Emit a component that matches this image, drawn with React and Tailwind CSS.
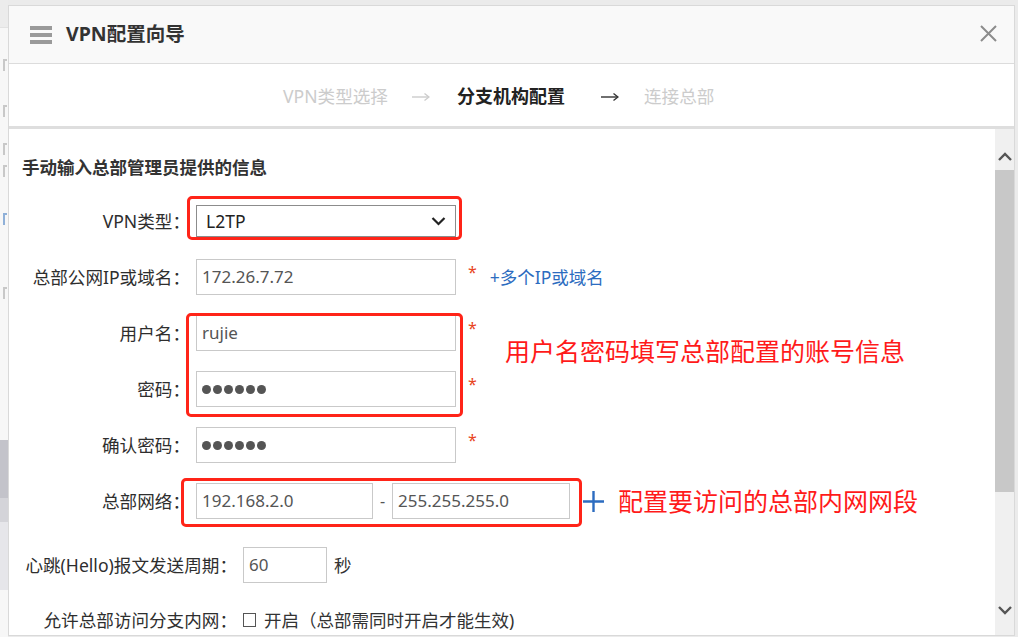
import React from 'react';

const Star = () => (
  <span className="ml-[12px] -mt-[10px] text-[16px] leading-none text-[#e8441c]">*</span>
);

const Field = ({ children, className = 'w-[260px]' }) => (
  <div className={`h-[36px] border border-[#c9c9c9] bg-white flex items-center pl-[5px] text-[17px] text-[#555] ${className}`}>
    {children}
  </div>
);

const Dots = () => (
  <div className="flex gap-[2px] pt-[1px]">
    {[0, 1, 2, 3, 4, 5].map((i) => (
      <span key={i} className="w-[9px] h-[9px] rounded-full bg-[#555]" />
    ))}
  </div>
);

const Row = ({ label, labelW = 'w-[181px]', h = 'h-[56px]', children }) => (
  <div className={`flex items-center ${h}`}>
    <div className={`${labelW} shrink-0 text-right text-[17.6px] text-[#2e2e2e] whitespace-nowrap`}>{label}</div>
    <div className="ml-[6px] flex items-center">{children}</div>
  </div>
);

const Arrow = ({ color }) => (
  <svg width="18" height="10" viewBox="0 0 18 10" fill="none" stroke={color} strokeWidth="1.4">
    <path d="M0 5h16.5" />
    <path d="M12.5 1.5 17 5l-4.5 3.5" />
  </svg>
);

// 背景页左侧露出的一小条（只剩字的残边）
const Frag = ({ color = '#c8c8c8', h = 'h-[22px]' }) => (
  <div className={`${h} flex items-center justify-end pr-[1px]`}>
    <span className="w-[4px] h-[12px] border-l-2 border-t-2" style={{ borderColor: color }} />
  </div>
);

const LeftStrip = () => (
  <div className="w-[8px] shrink-0 flex flex-col bg-[#f7f7f7]">
    <div className="h-[28px] bg-[#ececec] border-b border-[#e2e2e2]" />
    <div className="h-[26px]" />
    <Frag />
    <div className="h-[24px]" />
    <Frag />
    <div className="h-[16px]" />
    <Frag />
    <Frag />
    <div className="h-[26px]" />
    <Frag color="#8fb0d8" />
    <div className="h-[52px]" />
    <Frag />
    <div className="h-[136px]" />
    <div className="h-[58px] bg-[#c3c3ca]" />
    <div className="h-[24px] bg-[#d4d4d9]" />
    <div className="h-[68px] bg-[#e6e6ea]" />
    <div className="flex-1" />
  </div>
);

export default function App() {
  return (
    <div className="w-[1018px] h-[637px] overflow-hidden bg-[#ebebeb] flex font-['Noto_Sans','Noto_Sans_CJK_SC',sans-serif]">
      <LeftStrip />
      <div className="mt-[5px] w-[1007px] h-[631px] shrink-0 border border-[#d9d9d9] bg-white flex flex-col">
        {/* Header */}
        <div className="h-[58px] shrink-0 bg-[#f9f9f9] border-b border-[#dcdcdc] flex items-center pl-[21px] pr-[17px]">
          <div className="w-[22px] flex flex-col gap-[3px]">
            <span className="h-[4px] bg-[#9a9a9a]" />
            <span className="h-[4px] bg-[#9a9a9a]" />
            <span className="h-[4px] bg-[#9a9a9a]" />
          </div>
          <div className="ml-[14px] text-[19.5px] font-bold text-[#333] leading-none -mt-[2px]">VPN配置向导</div>
          <div className="flex-1" />
          <svg width="17" height="17" viewBox="0 0 17 17" stroke="#8c8c8c" strokeWidth="2" className="-mt-[3px]">
            <path d="M1 1l15 15M16 1 1 16" />
          </svg>
        </div>

        {/* Steps */}
        <div className="h-[65px] shrink-0 border-b-[3px] border-[#dedede] flex items-center pl-[274px] pt-[3px] text-[17.6px]">
          <span className="text-[#cccccc]">VPN类型选择</span>
          <span className="ml-[24px]"><Arrow color="#cccccc" /></span>
          <span className="ml-[27px] text-[18px] font-bold text-[#222]">分支机构配置</span>
          <span className="ml-[36px]"><Arrow color="#333333" /></span>
          <span className="ml-[25px] text-[#cccccc]">连接总部</span>
        </div>

        {/* Content */}
        <div className="flex-1 flex min-h-0">
          <div className="relative flex-1 overflow-hidden">
            <div className="h-[64px] pl-[13px] pt-[26px] text-[17.5px] leading-[24px] font-bold text-[#333]">
              手动输入总部管理员提供的信息
            </div>

            <Row label="VPN类型：">
              <div className="w-[260px] h-[32px] border border-[#8c8c8c] bg-white flex items-center pl-[9px] pr-[9px] text-[17.5px] text-[#222]">
                <span className="flex-1">L2TP</span>
                <svg width="15" height="10" viewBox="0 0 15 10" fill="none" stroke="#222" strokeWidth="2.2">
                  <path d="M1.5 2l6 6 6-6" />
                </svg>
              </div>
            </Row>

            <Row label="总部公网IP或域名：">
              <Field>172.26.7.72</Field>
              <Star />
              <span className="ml-[13px] text-[17.5px] text-[#2c6cc0]">+多个IP或域名</span>
            </Row>

            <Row label="用户名：">
              <Field>rujie</Field>
              <Star />
            </Row>

            <Row label="密码：">
              <Field><Dots /></Field>
              <Star />
            </Row>

            <Row label="确认密码：">
              <Field><Dots /></Field>
              <Star />
            </Row>

            <Row label="总部网络：">
              <Field className="w-[177px]">192.168.2.0</Field>
              <span className="w-[19px] text-center text-[16px] text-[#555]">-</span>
              <Field className="w-[178px]">255.255.255.0</Field>
              <svg width="21" height="21" viewBox="0 0 21 21" stroke="#2c6cc0" strokeWidth="2.4" className="ml-[13px]">
                <path d="M10.5 0v21M0 10.5h21" />
              </svg>
              <span className="ml-[14px] text-[25px] leading-none text-[#ff1a1a]">配置要访问的总部内网网段</span>
            </Row>

            <Row label="心跳(Hello)报文发送周期：" labelW="w-[228px]" h="h-[72px]">
              <Field className="w-[84px]">60</Field>
              <span className="ml-[7px] text-[17.5px] text-[#333]">秒</span>
            </Row>

            <Row label="允许总部访问分支内网：" labelW="w-[228px]" h="h-[38px]">
              <span className="w-[13px] h-[14px] border border-[#555] bg-white" />
              <span className="ml-[8px] text-[17.5px] text-[#333] whitespace-nowrap">开启（总部需同时开启才能生效)</span>
            </Row>

            {/* 标注 */}
            <div className="absolute left-[178px] top-[67px] w-[275px] h-[44px] border-[3px] border-[#ff2418] rounded-[5px]" />
            <div className="absolute left-[177px] top-[184px] w-[277px] h-[104px] border-[3px] border-[#ff2418] rounded-[5px]" />
            <div className="absolute left-[172px] top-[349px] w-[401px] h-[49px] border-[3px] border-[#ff2418] rounded-[5px]" />
            <div className="absolute left-[496px] top-[206px] text-[25px] leading-[32px] text-[#ff1a1a] whitespace-nowrap">
              用户名密码填写总部配置的账号信息
            </div>
          </div>

          {/* Scrollbar */}
          <div className="w-[19px] shrink-0 bg-[#f0f0f0] flex flex-col items-center">
            <div className="h-[41px] flex items-end pb-[9px]">
              <svg width="14" height="9" viewBox="0 0 14 9" fill="none" stroke="#555" strokeWidth="2.4">
                <path d="M1 8l6-6 6 6" />
              </svg>
            </div>
            <div className="w-full h-[322px] bg-[#c8c8c8]" />
            <div className="flex-1 flex items-end pb-[20px]">
              <svg width="14" height="9" viewBox="0 0 14 9" fill="none" stroke="#555" strokeWidth="2.4">
                <path d="M1 1l6 6 6-6" />
              </svg>
            </div>
          </div>
        </div>
      </div>
    </div>
  );
}
